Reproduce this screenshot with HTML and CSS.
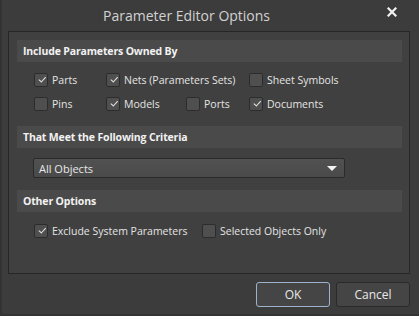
FILE: index.html
```html
<!DOCTYPE html>
<html>
<head>
<meta charset="utf-8">
<link rel="stylesheet" href="styles.css">
</head>
<body>
<div class="window">
  <div class="titlebar">
    <span class="title">Parameter Editor Options</span>
    <span class="close">
      <svg width="10" height="10" viewBox="0 0 10 10"><path d="M1.5 1.5 L8.5 8.5 M8.5 1.5 L1.5 8.5" stroke="#f2f2f2" stroke-width="2.2" stroke-linecap="square"/></svg>
    </span>
  </div>
  <div class="panel">
    <div class="section-header">Include Parameters Owned By</div>
    <div class="checks">
      <div class="row">
        <label class="item w72"><span class="box on"></span>Parts</label>
        <label class="item w143"><span class="box on"></span>Nets (Parameters Sets)</label>
        <label class="item"><span class="box"></span>Sheet Symbols</label>
      </div>
      <div class="row">
        <label class="item w72"><span class="box"></span>Pins</label>
        <label class="item w80"><span class="box on"></span>Models</label>
        <label class="item w63"><span class="box"></span>Ports</label>
        <label class="item"><span class="box on"></span>Documents</label>
      </div>
    </div>
    <div class="section-header">That Meet the Following Criteria</div>
    <div class="select-wrap">
      <div class="select"><span>All Objects</span><span class="arrow"></span></div>
    </div>
    <div class="section-header">Other Options</div>
    <div class="checks single">
      <div class="row">
        <label class="item w168"><span class="box on"></span>Exclude System Parameters</label>
        <label class="item"><span class="box"></span>Selected Objects Only</label>
      </div>
    </div>
  </div>
  <div class="buttons">
    <div class="btn focus">OK</div>
    <div class="btn">Cancel</div>
  </div>
</div>
</body>
</html>
```
FILE: styles.css
```css
html, body {
  margin: 0;
  padding: 0;
  background: #3b3b3b;
}
.window {
  width: 419px;
  height: 316px;
  box-sizing: border-box;
  background: #3c3c3c;
  border-left: 2px solid #333333;
  border-bottom: 2px solid #333333;
  display: flex;
  flex-direction: column;
  font-family: "Open Sans", "Noto Sans", sans-serif;
  color: #e8e8e8;
}
.titlebar {
  height: 31px;
  display: flex;
  align-items: center;
}
.title {
  font-size: 14px;
  color: #d2d2d2;
  margin-left: 101px;
  padding-bottom: 1px;
}
.close {
  margin-left: auto;
  margin-right: 22px;
  display: flex;
  margin-bottom: 7px;
}
.panel {
  margin: 0 9px 0 6px;
  height: 243px;
  box-sizing: border-box;
  border: 1px solid #262626;
  background: #404040;
  padding: 8px 7px 0 8px;
  display: flex;
  flex-direction: column;
}
.section-header {
  height: 22px;
  background: #4a4a4a;
  font-weight: bold;
  font-size: 10.5px;
  letter-spacing: -0.15px;
  color: #f2f2f2;
  display: flex;
  align-items: center;
  padding-left: 6px;
  flex: none;
}
.checks {
  padding: 11px 0 15px 17px;
  display: flex;
  flex-direction: column;
  gap: 10px;
}
.checks.single {
  padding-top: 12px;
}
.row {
  display: flex;
  height: 14px;
  align-items: center;
}
.item {
  display: flex;
  align-items: center;
  gap: 4px;
  font-size: 10.5px;
  color: #e4e4e4;
  white-space: nowrap;
  flex: none;
}
.w72 { width: 72px; }
.w143 { width: 143px; }
.w80 { width: 80px; }
.w63 { width: 63px; }
.w168 { width: 168px; }
.box {
  width: 14px;
  height: 14px;
  box-sizing: border-box;
  border: 1px solid #2c2c2c;
  border-radius: 2px;
  background: #4f4f4f;
  position: relative;
  flex: none;
}
.box.on::after {
  content: "";
  position: absolute;
  left: 3px;
  top: 2px;
  width: 6px;
  height: 3px;
  border-left: 1px solid #e8e8e8;
  border-bottom: 1px solid #e8e8e8;
  transform: rotate(-48deg) translate(0px, 1px);
  transform-origin: center;
}
.select-wrap {
  padding: 10px 0 12px 16px;
}
.select {
  width: 312px;
  height: 20px;
  box-sizing: border-box;
  border: 1px solid #2a2a2a;
  border-radius: 2px;
  background: linear-gradient(#515151, #4a4a4a);
  display: flex;
  align-items: center;
  justify-content: space-between;
  padding: 0 7px 0 5px;
  font-size: 11px;
  color: #e8e8e8;
}
.arrow {
  width: 0;
  height: 0;
  border-left: 5px solid transparent;
  border-right: 5px solid transparent;
  border-top: 5px solid #f4f4f4;
}
.buttons {
  display: flex;
  justify-content: flex-end;
  gap: 6px;
  padding: 8px 9px 0 0;
}
.btn {
  width: 74px;
  height: 25px;
  box-sizing: border-box;
  border: 1px solid #2a2a2a;
  border-radius: 3px;
  background: #454545;
  display: flex;
  align-items: center;
  justify-content: center;
  font-size: 12px;
  color: #e8e8e8;
}
.btn.focus {
  border-color: #9bb4cc;
}
```
